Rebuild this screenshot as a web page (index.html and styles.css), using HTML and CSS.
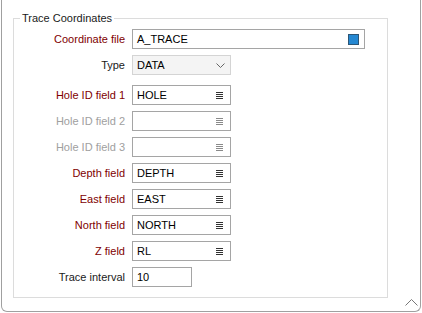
FILE: index.html
```html
<!DOCTYPE html>
<html lang="en">
<head>
    <meta charset="UTF-8">
    <title>Trace Coordinates</title>
    <link rel="stylesheet" href="styles.css">
</head>
<body>
    <div class="panel">
        <fieldset class="group">
            <legend>Trace Coordinates</legend>
            <div class="form">
                <div class="row">
                    <label class="req">Coordinate file</label>
                    <div class="field wide">
                        <span class="value">A_TRACE</span>
                        <span class="file-icon"></span>
                    </div>
                </div>
                <div class="row type-row">
                    <label>Type</label>
                    <div class="field select">
                        <span class="value">DATA</span>
                        <svg class="chev" width="9" height="5" viewBox="0 0 9 5"><path d="M0.5 0.5 L4.5 4.5 L8.5 0.5" fill="none" stroke="#666" stroke-width="1"/></svg>
                    </div>
                </div>
                <div class="row">
                    <label class="req">Hole ID field 1</label>
                    <div class="field">
                        <span class="value">HOLE</span>
                        <svg class="list" width="7" height="7" viewBox="0 0 7 7"><path d="M0 0.5h7M0 2.5h7M0 4.5h7M0 6.5h7" stroke="#333" stroke-width="1"/></svg>
                    </div>
                </div>
                <div class="row off">
                    <label>Hole ID field 2</label>
                    <div class="field">
                        <span class="value"></span>
                        <svg class="list" width="7" height="7" viewBox="0 0 7 7"><path d="M0 0.5h7M0 2.5h7M0 4.5h7M0 6.5h7" stroke="#8a8a8a" stroke-width="1"/></svg>
                    </div>
                </div>
                <div class="row off">
                    <label>Hole ID field 3</label>
                    <div class="field">
                        <span class="value"></span>
                        <svg class="list" width="7" height="7" viewBox="0 0 7 7"><path d="M0 0.5h7M0 2.5h7M0 4.5h7M0 6.5h7" stroke="#8a8a8a" stroke-width="1"/></svg>
                    </div>
                </div>
                <div class="row">
                    <label class="req">Depth field</label>
                    <div class="field">
                        <span class="value">DEPTH</span>
                        <svg class="list" width="7" height="7" viewBox="0 0 7 7"><path d="M0 0.5h7M0 2.5h7M0 4.5h7M0 6.5h7" stroke="#333" stroke-width="1"/></svg>
                    </div>
                </div>
                <div class="row">
                    <label class="req">East field</label>
                    <div class="field">
                        <span class="value">EAST</span>
                        <svg class="list" width="7" height="7" viewBox="0 0 7 7"><path d="M0 0.5h7M0 2.5h7M0 4.5h7M0 6.5h7" stroke="#333" stroke-width="1"/></svg>
                    </div>
                </div>
                <div class="row">
                    <label class="req">North field</label>
                    <div class="field">
                        <span class="value">NORTH</span>
                        <svg class="list" width="7" height="7" viewBox="0 0 7 7"><path d="M0 0.5h7M0 2.5h7M0 4.5h7M0 6.5h7" stroke="#333" stroke-width="1"/></svg>
                    </div>
                </div>
                <div class="row">
                    <label class="req">Z field</label>
                    <div class="field">
                        <span class="value">RL</span>
                        <svg class="list" width="7" height="7" viewBox="0 0 7 7"><path d="M0 0.5h7M0 2.5h7M0 4.5h7M0 6.5h7" stroke="#333" stroke-width="1"/></svg>
                    </div>
                </div>
                <div class="row">
                    <label>Trace interval</label>
                    <div class="field short">
                        <span class="value">10</span>
                    </div>
                </div>
            </div>
        </fieldset>
        <div class="footer">
            <svg width="13" height="7" viewBox="0 0 13 7"><path d="M0.5 6.5 L6.5 0.5 L12.5 6.5" fill="none" stroke="#777" stroke-width="1"/></svg>
        </div>
    </div>
</body>
</html>
```

FILE: styles.css
```css
body {
    margin: 0;
    padding: 0;
    background-color: #ffffff;
    font-family: "Liberation Sans", Arial, sans-serif;
    font-size: 11px;
    color: #1a1a1a;
}

.panel {
    margin-left: 1px;
    width: 420px;
    height: 312px;
    box-sizing: border-box;
    border: 1px solid #a0a0a0;
    border-top: none;
    border-radius: 0 0 6px 6px;
    background-color: #ffffff;
    display: flex;
    flex-direction: column;
}

.group {
    margin: 11px 0 0 11px;
    padding: 0 0 10px 0;
    width: 375px;
    box-sizing: border-box;
    border: 1px solid #dcdcdc;
    min-width: 0;
}

.group legend {
    margin-left: 6px;
    padding: 0 2px;
    line-height: 14px;
    color: #1a1a1a;
}

.form {
    padding-top: 4px;
    display: flex;
    flex-direction: column;
    gap: 6px;
}

.row {
    display: flex;
    align-items: center;
    gap: 7px;
    height: 20px;
}

.type-row {
    margin-bottom: 4px;
}

.row label {
    width: 111px;
    text-align: right;
    color: #1a1a1a;
}

.row label.req {
    color: #800000;
}

.row.off label {
    color: #a0a0a0;
}

.field {
    width: 99px;
    height: 20px;
    box-sizing: border-box;
    border: 1px solid #a5a5a5;
    background-color: #ffffff;
    display: flex;
    align-items: center;
    justify-content: space-between;
    padding: 0 7px 0 4px;
    color: #000000;
}

.field.wide {
    width: 233px;
    padding-right: 5px;
}

.field.short {
    width: 60px;
}

.field.select {
    border-color: #d4d4d4;
    background-color: #f4f4f4;
    padding-right: 5px;
}

.file-icon {
    width: 11px;
    height: 11px;
    box-sizing: border-box;
    background-color: #2588d2;
    border: 1px solid #2d5676;
}

.footer {
    flex: 1;
    display: flex;
    justify-content: flex-end;
    align-items: flex-start;
    padding: 1px 2px 0 0;
}
```
